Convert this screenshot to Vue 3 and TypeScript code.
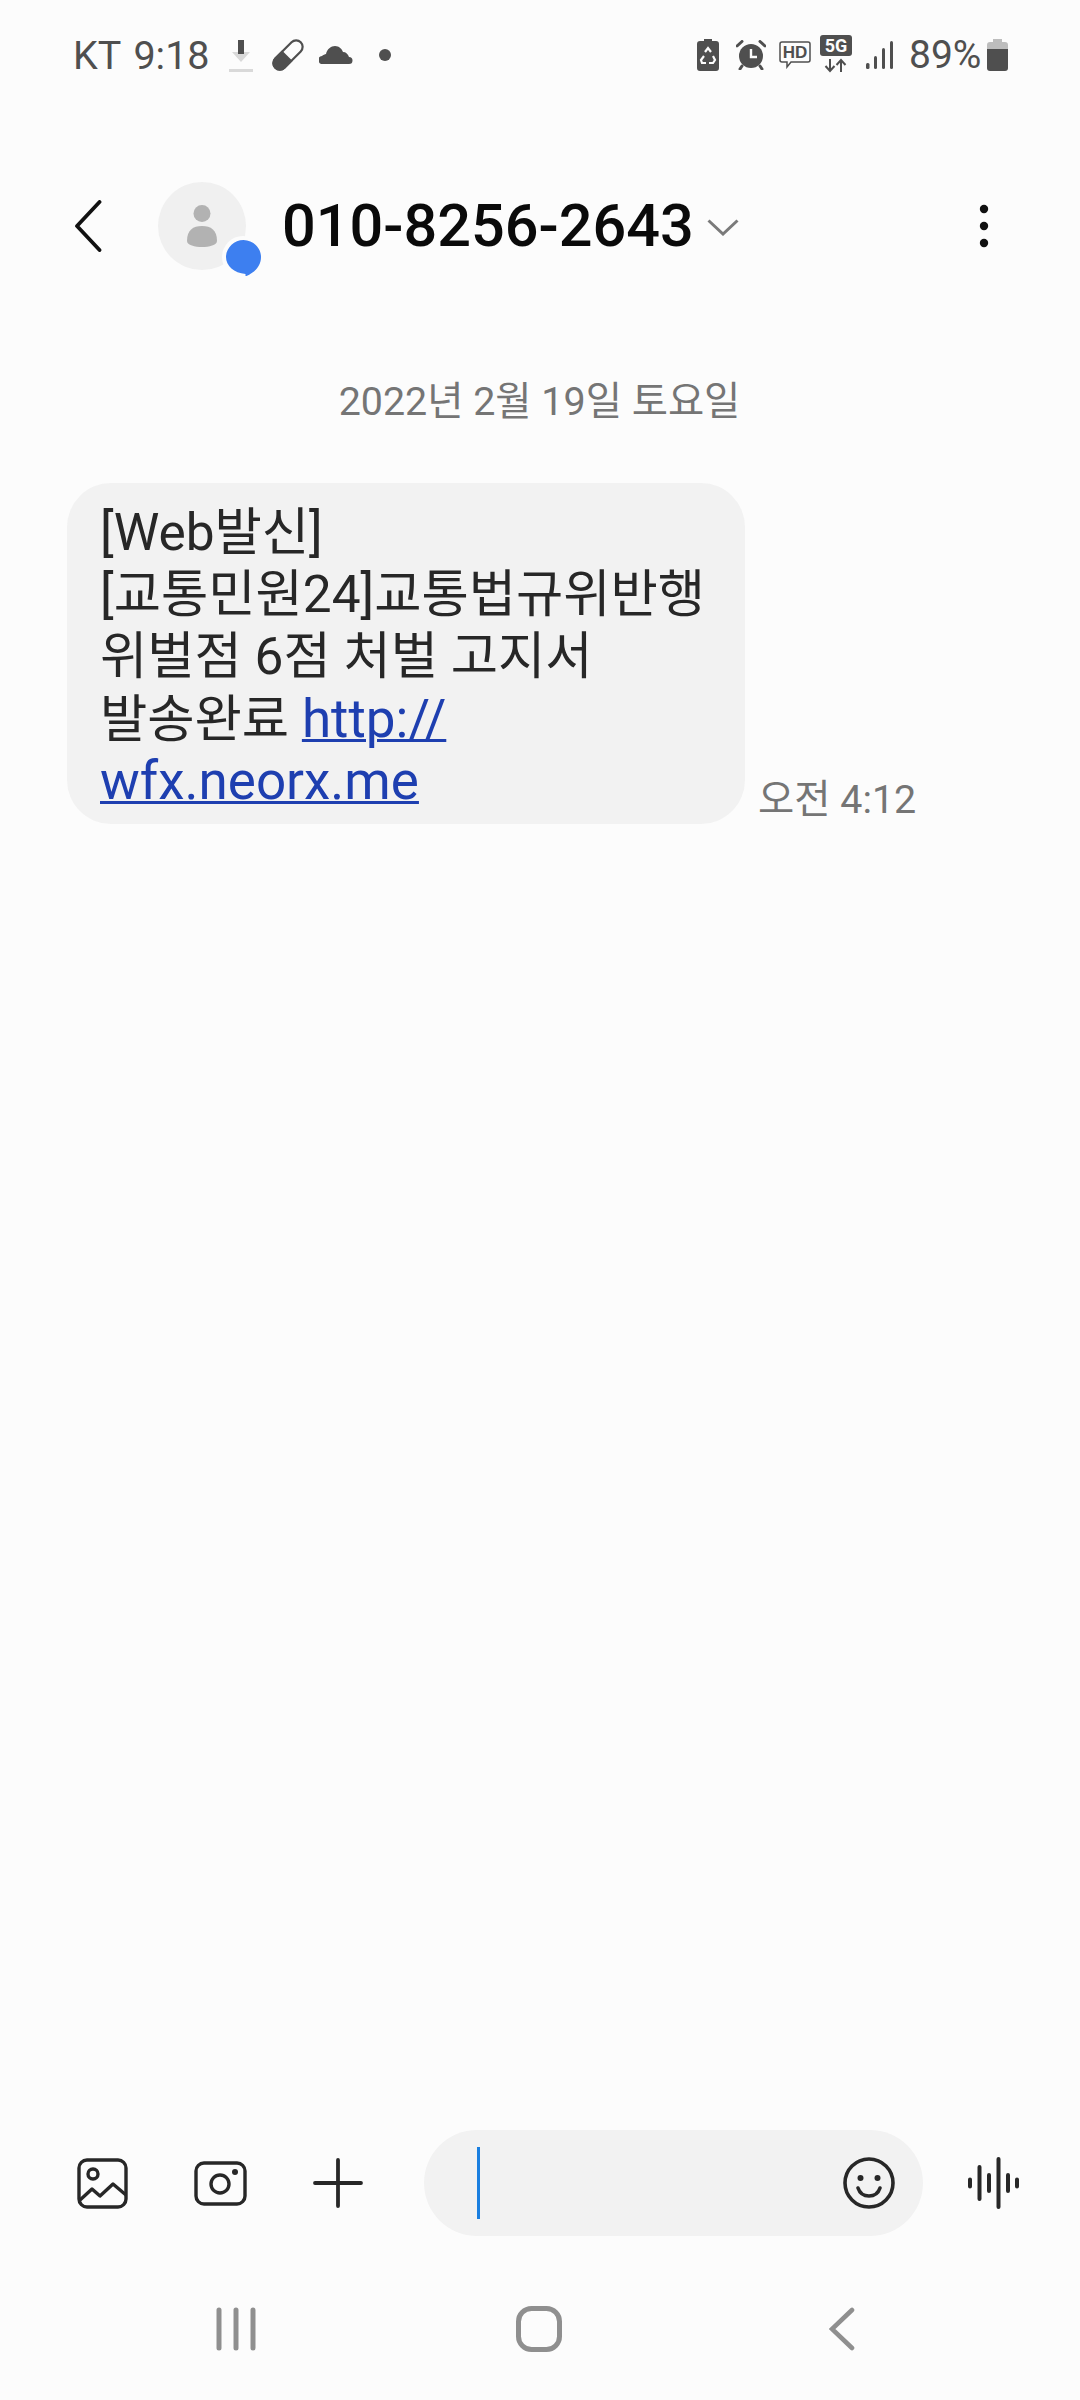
<script setup lang="ts">
const lines: string[] = ['[Web발신]', '[교통민원24]교통법규위반행', '위벌점 6점 처벌 고지서']
</script>

<template>
  <div class="screen">
    <div class="status">
      <span class="carrier">KT 9:18</span>
      <svg class="s-dl" width="24" height="32" viewBox="0 0 24 32"><path d="M9 0h6v12h6l-9 10-9-10h6z" fill="#d9d9d9"/><path d="M9 0h6v14H9z" fill="#4f4f4f"/><rect y="29" width="24" height="3" fill="#d9d9d9"/></svg>
      <svg class="s-pill" width="32" height="32" viewBox="0 0 32 32"><g transform="rotate(-45 16 16)"><rect x="-2" y="9.500" width="36" height="13" rx="6.500" fill="#fcfcfc" stroke="#4f4f4f" stroke-width="2.200"/><path d="M15 8.500H4.500a7.500 7.500 0 0 0 0 15H15z" fill="#4f4f4f"/></g></svg>
      <svg class="s-cloud" width="34" height="19" viewBox="0 0 34 19"><path d="M4 19a4 4 0 0 1-1-8c1-1 3-2 4-2 1-5 5-8 9-8 4 0 7 3 8 6 3 0 5 2 6 5a3.500 3.500 0 0 1 0 7z" fill="#4f4f4f"/></svg>
      <span class="s-dot"></span>
      <span class="grow"></span>
      <svg class="s-bat" width="22" height="32" viewBox="0 0 22 32"><path d="M7 0h8v2h4a3 3 0 0 1 3 3v24a3 3 0 0 1-3 3H3a3 3 0 0 1-3-3V5a3 3 0 0 1 3-3h4z" fill="#4f4f4f"/><g fill="none" stroke="#fcfcfc" stroke-width="2.200"><path d="M8 13l3-4 3 4"/><path d="M16 17l2 4-2 3h-4"/><path d="M9 24H5l-1-3 3-4"/></g></svg>
      <svg class="s-alarm" width="30" height="30" viewBox="0 0 30 30"><circle cx="15" cy="16" r="12" fill="#4f4f4f"/><path d="M1 6 6 1.500M29 6 24 1.500M6 26l-2 3M24 26l2 3" stroke="#4f4f4f" stroke-width="3" stroke-linecap="round"/><path d="M15 9v8h6" fill="none" stroke="#fcfcfc" stroke-width="2.400"/></svg>
      <svg class="s-hd" width="32" height="28" viewBox="0 0 32 28"><path d="M3 1h26a2 2 0 0 1 2 2v16a2 2 0 0 1-2 2H12l-4 5v-5H3a2 2 0 0 1-2-2V3a2 2 0 0 1 2-2z" fill="none" stroke="#4f4f4f" stroke-width="1.500"/><text x="16" y="17" text-anchor="middle" class="hd-t">HD</text></svg>
      <svg class="s-5g" width="32" height="38" viewBox="0 0 32 38"><rect width="32" height="21" rx="3" fill="#4f4f4f"/><text x="16" y="17" text-anchor="middle" class="g-t">5G</text><path d="M10 24v12M5.500 31l4.500 5 4.500-5M21 37V25M16.500 30l4.500-5 4.500 5" fill="none" stroke="#4f4f4f" stroke-width="2"/></svg>
      <svg class="s-sig" width="27" height="30" viewBox="0 0 27 30"><g fill="#4f4f4f"><rect x="0" y="23" width="3.500" height="6" rx="1.500"/><rect x="8" y="16" width="3" height="13" rx="1.500"/><rect x="16" y="8" width="3" height="21" rx="1.500"/><rect x="24" y="1" width="3" height="28" rx="1.500"/></g></svg>
      <span class="pct">89%</span>
      <svg class="s-batt" width="21" height="32" viewBox="0 0 21 32"><path d="M6 0h9v3h3a3 3 0 0 1 3 3v4H0V6a3 3 0 0 1 3-3h3z" fill="#bdbdbd"/><path d="M0 10h21v19a3 3 0 0 1-3 3H3a3 3 0 0 1-3-3z" fill="#4f4f4f"/></svg>
    </div>

    <div class="header">
      <svg class="back" width="28" height="52" viewBox="0 0 28 52"><path d="M25.500 2 3 26l22.500 24" fill="none" stroke="#111" stroke-width="3.800" stroke-linecap="round" stroke-linejoin="round"/></svg>
      <div class="avatar">
        <svg width="30" height="42" viewBox="0 0 30 42"><ellipse cx="15" cy="8.500" rx="8.500" ry="8.500" fill="#b2b2b2"/><path d="M0 36c0-11 6-15 15-15s15 4 15 15c0 4-8 6-15 6S0 40 0 36z" fill="#b2b2b2"/></svg>
        <svg class="badge" width="43" height="44" viewBox="0 0 43 44"><circle cx="21" cy="21" r="21" fill="#fcfcfc"/><path d="M21.500 4C31 4 39 12 39 21c0 9-6 15-14.500 19l-1 0V38C12 37 4 30 4 21 4 12 12 4 21.500 4z" fill="#3d7ff0"/></svg>
      </div>
      <span class="number">010-8256-2643</span>
      <svg class="caret" width="32" height="17" viewBox="0 0 32 17"><path d="M1.500 1.500 16 15 30.500 1.500" fill="none" stroke="#7a7a7a" stroke-width="3"/></svg>
      <span class="grow"></span>
      <svg class="more" width="10" height="44" viewBox="0 0 10 44"><circle cx="5" cy="5" r="4.200"/><circle cx="5" cy="22" r="4.200"/><circle cx="5" cy="39" r="4.200"/></svg>
    </div>

    <div class="date">2022년 2월 19일 토요일</div>

    <div class="row">
      <div class="bubble">
        <div v-for="l in lines" :key="l" class="line">{{ l }}</div>
        <div class="line">발송완료 <a class="link">http://</a></div>
        <div class="line"><a class="link">wfx.neorx.me</a></div>
      </div>
      <span class="time">오전 4:12</span>
    </div>

    <div class="grow"></div>

    <div class="composer">
      <svg class="c-gal" width="51" height="51" viewBox="0 0 51 51" fill="none" stroke="#272727" stroke-width="3.400"><rect x="2" y="2" width="47" height="47" rx="8"/><circle cx="16" cy="16" r="5"/><path d="M3 42 15 31l8 7 13-12 13 11" stroke-linejoin="round"/></svg>
      <svg class="c-cam" width="53" height="45" viewBox="0 0 53 45" fill="none" stroke="#272727" stroke-width="3.400"><rect x="2" y="2" width="49" height="41" rx="8"/><circle cx="26" cy="23" r="9"/><circle cx="41" cy="11" r="3" fill="#272727" stroke="none"/></svg>
      <svg class="c-plus" width="50" height="50" viewBox="0 0 50 50" stroke="#272727" stroke-width="3.800" stroke-linecap="round"><path d="M25 2v46M2 25h46"/></svg>
      <div class="input">
        <span class="cursor"></span>
        <span class="grow"></span>
        <svg width="52" height="52" viewBox="0 0 52 52" fill="none" stroke="#272727" stroke-width="3.600"><circle cx="26" cy="26" r="24"/><circle cx="17.500" cy="21" r="3" fill="#272727" stroke="none"/><circle cx="34.500" cy="21" r="3" fill="#272727" stroke="none"/><path d="M15 31c2 6 6 8 11 8s9-2 11-8" stroke-linecap="round"/></svg>
      </div>
      <svg class="c-voice" width="52" height="52" viewBox="0 0 52 52" stroke="#272727" stroke-width="4" stroke-linecap="round"><path d="M3 22.500v7M12.500 10v32M22 18v16M31.500 2v48M41 18v16M50 22.500v7"/></svg>
    </div>

    <div class="nav">
      <svg class="n-rec" width="40" height="44" viewBox="0 0 40 44" stroke="#8f8f8f" stroke-width="5" stroke-linecap="round"><path d="M3 3v38M20 3v38M37 3v38"/></svg>
      <svg class="n-home" width="46" height="46" viewBox="0 0 46 46" fill="none" stroke="#8f8f8f" stroke-width="5"><rect x="2.500" y="2.500" width="41" height="41" rx="13"/></svg>
      <svg class="n-back" width="26" height="44" viewBox="0 0 26 44" fill="none" stroke="#8f8f8f" stroke-width="4.600" stroke-linecap="round"><path d="M23 3 3 22l20 19"/></svg>
    </div>
  </div>
</template>

<style scoped>
.screen {
  width: 1080px;
  height: 2400px;
  background: #fcfcfc;
  display: flex;
  flex-direction: column;
  font-family: Roboto, "Noto Sans CJK KR", sans-serif;
  overflow: hidden;
}
.grow { flex: 1; }
svg { display: block; flex: none; }

.status {
  height: 110px;
  flex: none;
  display: flex;
  align-items: center;
  padding: 0 72px 0 73px;
  color: #4f4f4f;
}
.carrier { font-size: 39.500px; word-spacing: 3px; white-space: nowrap; width: 136px; }
.s-dl { margin-left: 20px; margin-top: 2px; }
.s-pill { margin-left: 19px; }
.s-cloud { margin-left: 15px; margin-top: -2px; }
.s-dot { width: 12px; height: 12px; border-radius: 50%; background: #4f4f4f; margin-left: 26px; }
.s-bat { margin-top: -1px; }
.s-alarm { margin-left: 17px; }
.s-hd { margin-left: 13px; }
.hd-t { font: 700 17px "Liberation Sans", sans-serif; fill: #4f4f4f; }
.s-5g { margin-left: 9px; margin-top: -3px; }
.g-t { font: 700 18px Roboto, sans-serif; fill: #fcfcfc; }
.s-sig { margin-left: 14px; }
.pct { font-size: 39px; margin-left: 16px; width: 72px; }
.s-batt { margin-left: 6px; }

.header {
  height: 110px;
  margin-top: 61px;
  flex: none;
  display: flex;
  align-items: center;
  padding: 0 91px 0 74px;
}
.avatar {
  width: 88px;
  height: 88px;
  border-radius: 50%;
  background: #f0f0f0;
  margin-left: 56px;
  display: flex;
  align-items: center;
  justify-content: center;
  position: relative;
}
.badge { position: absolute; left: 64px; top: 54px; }
.number {
  font-size: 59.400px;
  font-weight: 500;
  color: #0a0a0a;
  margin-left: 36px;
  white-space: nowrap;
}
.caret { margin-left: 13px; margin-top: 3px; }
.more { fill: #111; }

.date {
  margin-top: 97px;
  flex: none;
  text-align: center;
  font-size: 39.400px;
  line-height: 48px;
  color: #757575;
  padding-right: 1px;
}

.row {
  margin-top: 57px;
  padding-left: 67px;
  display: flex;
  align-items: flex-end;
  flex: none;
}
.bubble {
  width: 678px;
  height: 341px;
  box-sizing: border-box;
  padding: 19px 20px 0 33px;
  background: #f2f2f2;
  border-radius: 44px;
  font-size: 51.400px;
  color: #272727;
  white-space: nowrap;
}
.line { height: 62px; line-height: 62px; }
.link { color: #1e3fb0; font-size: 53px; text-decoration: underline; text-decoration-thickness: 3px; }
.time {
  margin-left: 13px;
  margin-bottom: 1px;
  font-size: 39.400px;
  line-height: 46px;
  color: #757575;
  white-space: nowrap;
}

.composer {
  flex: none;
  height: 106px;
  display: flex;
  align-items: center;
  padding-left: 77px;
}
.c-cam { margin-left: 66px; }
.c-plus { margin-left: 66px; }
.input {
  width: 499px;
  height: 106px;
  margin-left: 61px;
  box-sizing: border-box;
  padding: 0 28px 0 53px;
  border-radius: 53px;
  background: #f2f2f2;
  display: flex;
  align-items: center;
}
.cursor { width: 3px; height: 72px; background: #1a7fe0; }
.c-voice { margin-left: 44px; }

.nav {
  flex: none;
  height: 164px;
  display: flex;
  align-items: center;
  padding: 22px 0 0 216px;
  box-sizing: border-box;
}
.n-home { margin-left: 260px; }
.n-back { margin-left: 267px; }
</style>

<style>
html, body { margin: 0; background: #fcfcfc; }
</style>
